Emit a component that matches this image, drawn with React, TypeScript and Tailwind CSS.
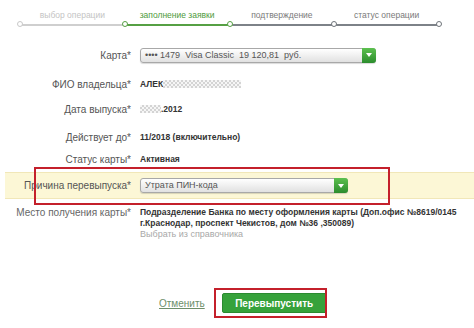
import React from 'react';

const steps = [
  { name: 'выбор операции', text: 'text-[#c4c4c4]', line: 'bg-[#cfcfcf]', dot: 'border-[#c8c8c8]' },
  { name: 'заполнение заявки', text: 'text-[#4e9a3c]', line: 'bg-[#56a044]', dot: 'border-[#56a044]' },
  { name: 'подтверждение', text: 'text-[#7a7a7a]', line: 'bg-[#7d8288]', dot: 'border-[#56a044]' },
  { name: 'статус операции', text: 'text-[#7a7a7a]', line: 'bg-[#7d8288]', dot: 'border-[#6f747a]' },
];

const Select = ({ value, width }: { value: string; width: string }) => (
  <div
    className={`flex h-[15px] ${width} items-center rounded-[3px] border border-[#a8a8a8] bg-gradient-to-b from-white to-[#e1e1e1] shadow-[0_1px_1px_rgba(0,0,0,0.15)]`}
  >
    <span className="flex-1 truncate whitespace-pre pl-[4px] text-[9px] leading-none text-[#555]">{value}</span>
    <span className="-mr-px flex h-[15px] w-[14px] items-center justify-center rounded-r-[3px] bg-gradient-to-b from-[#5cc04f] to-[#2b8d2d]">
      <svg width="6" height="4" viewBox="0 0 6 4">
        <path d="M0 0 L6 0 L3 4 Z" fill="#fff" />
      </svg>
    </span>
  </div>
);

// blurred-out personal data
const Masked = ({ width }: { width: string }) => (
  <span
    className={`inline-block h-[8px] ${width} bg-[repeating-conic-gradient(#d4d4d4_0_25%,#f6f6f6_0_50%)] bg-[length:4px_4px]`}
  />
);

const Row = ({ label, children, mt }: { label: string; children: React.ReactNode; mt: string }) => (
  <div className={`flex h-[20px] items-center ${mt}`}>
    <div className="w-[131px] shrink-0 text-right text-[10px] text-[#555]">{label}</div>
    <div className="ml-[9px] flex items-center">{children}</div>
  </div>
);

export default function App() {
  return (
    <div
      className="relative h-[328px] w-[474px] overflow-hidden bg-white"
      style={{ fontFamily: '"Liberation Sans", Arial, sans-serif' }}
    >
      {/* Stepper */}
      <div className="relative ml-[20px] mt-[9px] grid w-[419px] grid-cols-4">
        {steps.map((s) => (
          <div key={s.name} className="flex flex-col items-center">
            <span className={`h-[12px] text-[8.5px] leading-[12px] ${s.text}`}>{s.name}</span>
            <div className={`mt-[3px] h-[2px] w-full ${s.line}`} />
          </div>
        ))}
        {steps.map((s, i) => (
          <span
            key={i}
            className={`absolute top-[12px] h-[6px] w-[6px] rounded-full border-[1.5px] bg-white ${s.dot}`}
            style={{ left: `${(i * 419) / 4 - 3}px` }}
          />
        ))}
        <span className="absolute left-[416px] top-[12px] h-[6px] w-[6px] rounded-full border-[1.5px] border-[#6f747a] bg-white" />
      </div>

      {/* Form */}
      <Row label="Карта*" mt="mt-[19px]">
        <Select value="•••• 1479  Visa Classic  19 120,81  руб." width="w-[236px]" />
      </Row>
      <Row label="ФИО владельца*" mt="mt-[9px]">
        <span className="flex items-center text-[8.5px] font-bold text-[#333]">
          АЛЕК
          <Masked width="w-[78px]" />
        </span>
      </Row>
      <Row label="Дата выпуска*" mt="mt-[5px]">
        <span className="flex items-center text-[8.5px] font-bold text-[#333]">
          <Masked width="w-[21px]" />
          .2012
        </span>
      </Row>
      <Row label="Действует до*" mt="mt-[8px]">
        <span className="text-[8.5px] font-bold text-[#333]">11/2018 (включительно)</span>
      </Row>
      <Row label="Статус карты*" mt="mt-[2px]">
        <span className="text-[8.5px] font-bold text-[#333]">Активная</span>
      </Row>

      <div className="ml-[5px] mt-[3px] flex h-[27px] items-center border-y border-[#f1e7b8] bg-[#fcf7d6]">
        <div className="w-[126px] shrink-0 text-right text-[10px] text-[#555]">Причина перевыпуска*</div>
        <div className="ml-[9px]">
          <Select value="Утрата ПИН-кода" width="w-[208px]" />
        </div>
      </div>

      <div className="mt-[8px] flex">
        <div className="w-[131px] shrink-0 text-right text-[10px] leading-[11px] text-[#666]">Место получения карты*</div>
        <div className="ml-[9px] whitespace-nowrap text-[8.5px] leading-[11px]">
          <div className="font-bold text-[#333]">
            Подразделение Банка по месту оформления карты (Доп.офис №8619/0145
            <br />
            г.Краснодар, проспект Чекистов, дом №36 ,350089)
          </div>
          <div className="text-[9px] text-[#a8a8a8]">Выбрать из справочника</div>
        </div>
      </div>

      {/* Actions */}
      <div className="ml-[159px] mt-[53px] flex items-center">
        <a className="text-[10px] text-[#6d8f6a] underline">Отменить</a>
        <button className="ml-[17px] h-[20px] w-[105px] rounded-[2px] border border-[#2b8a30] bg-[#36a23b] text-[10px] font-bold text-white">
          Перевыпустить
        </button>
      </div>

      {/* Annotation boxes */}
      <div className="pointer-events-none absolute left-[34px] top-[167px] h-[38px] w-[356px] border-2 border-[#c4202b]" />
      <div className="pointer-events-none absolute left-[214px] top-[288px] h-[30px] w-[113px] border-2 border-[#c4202b]" />
    </div>
  );
}
